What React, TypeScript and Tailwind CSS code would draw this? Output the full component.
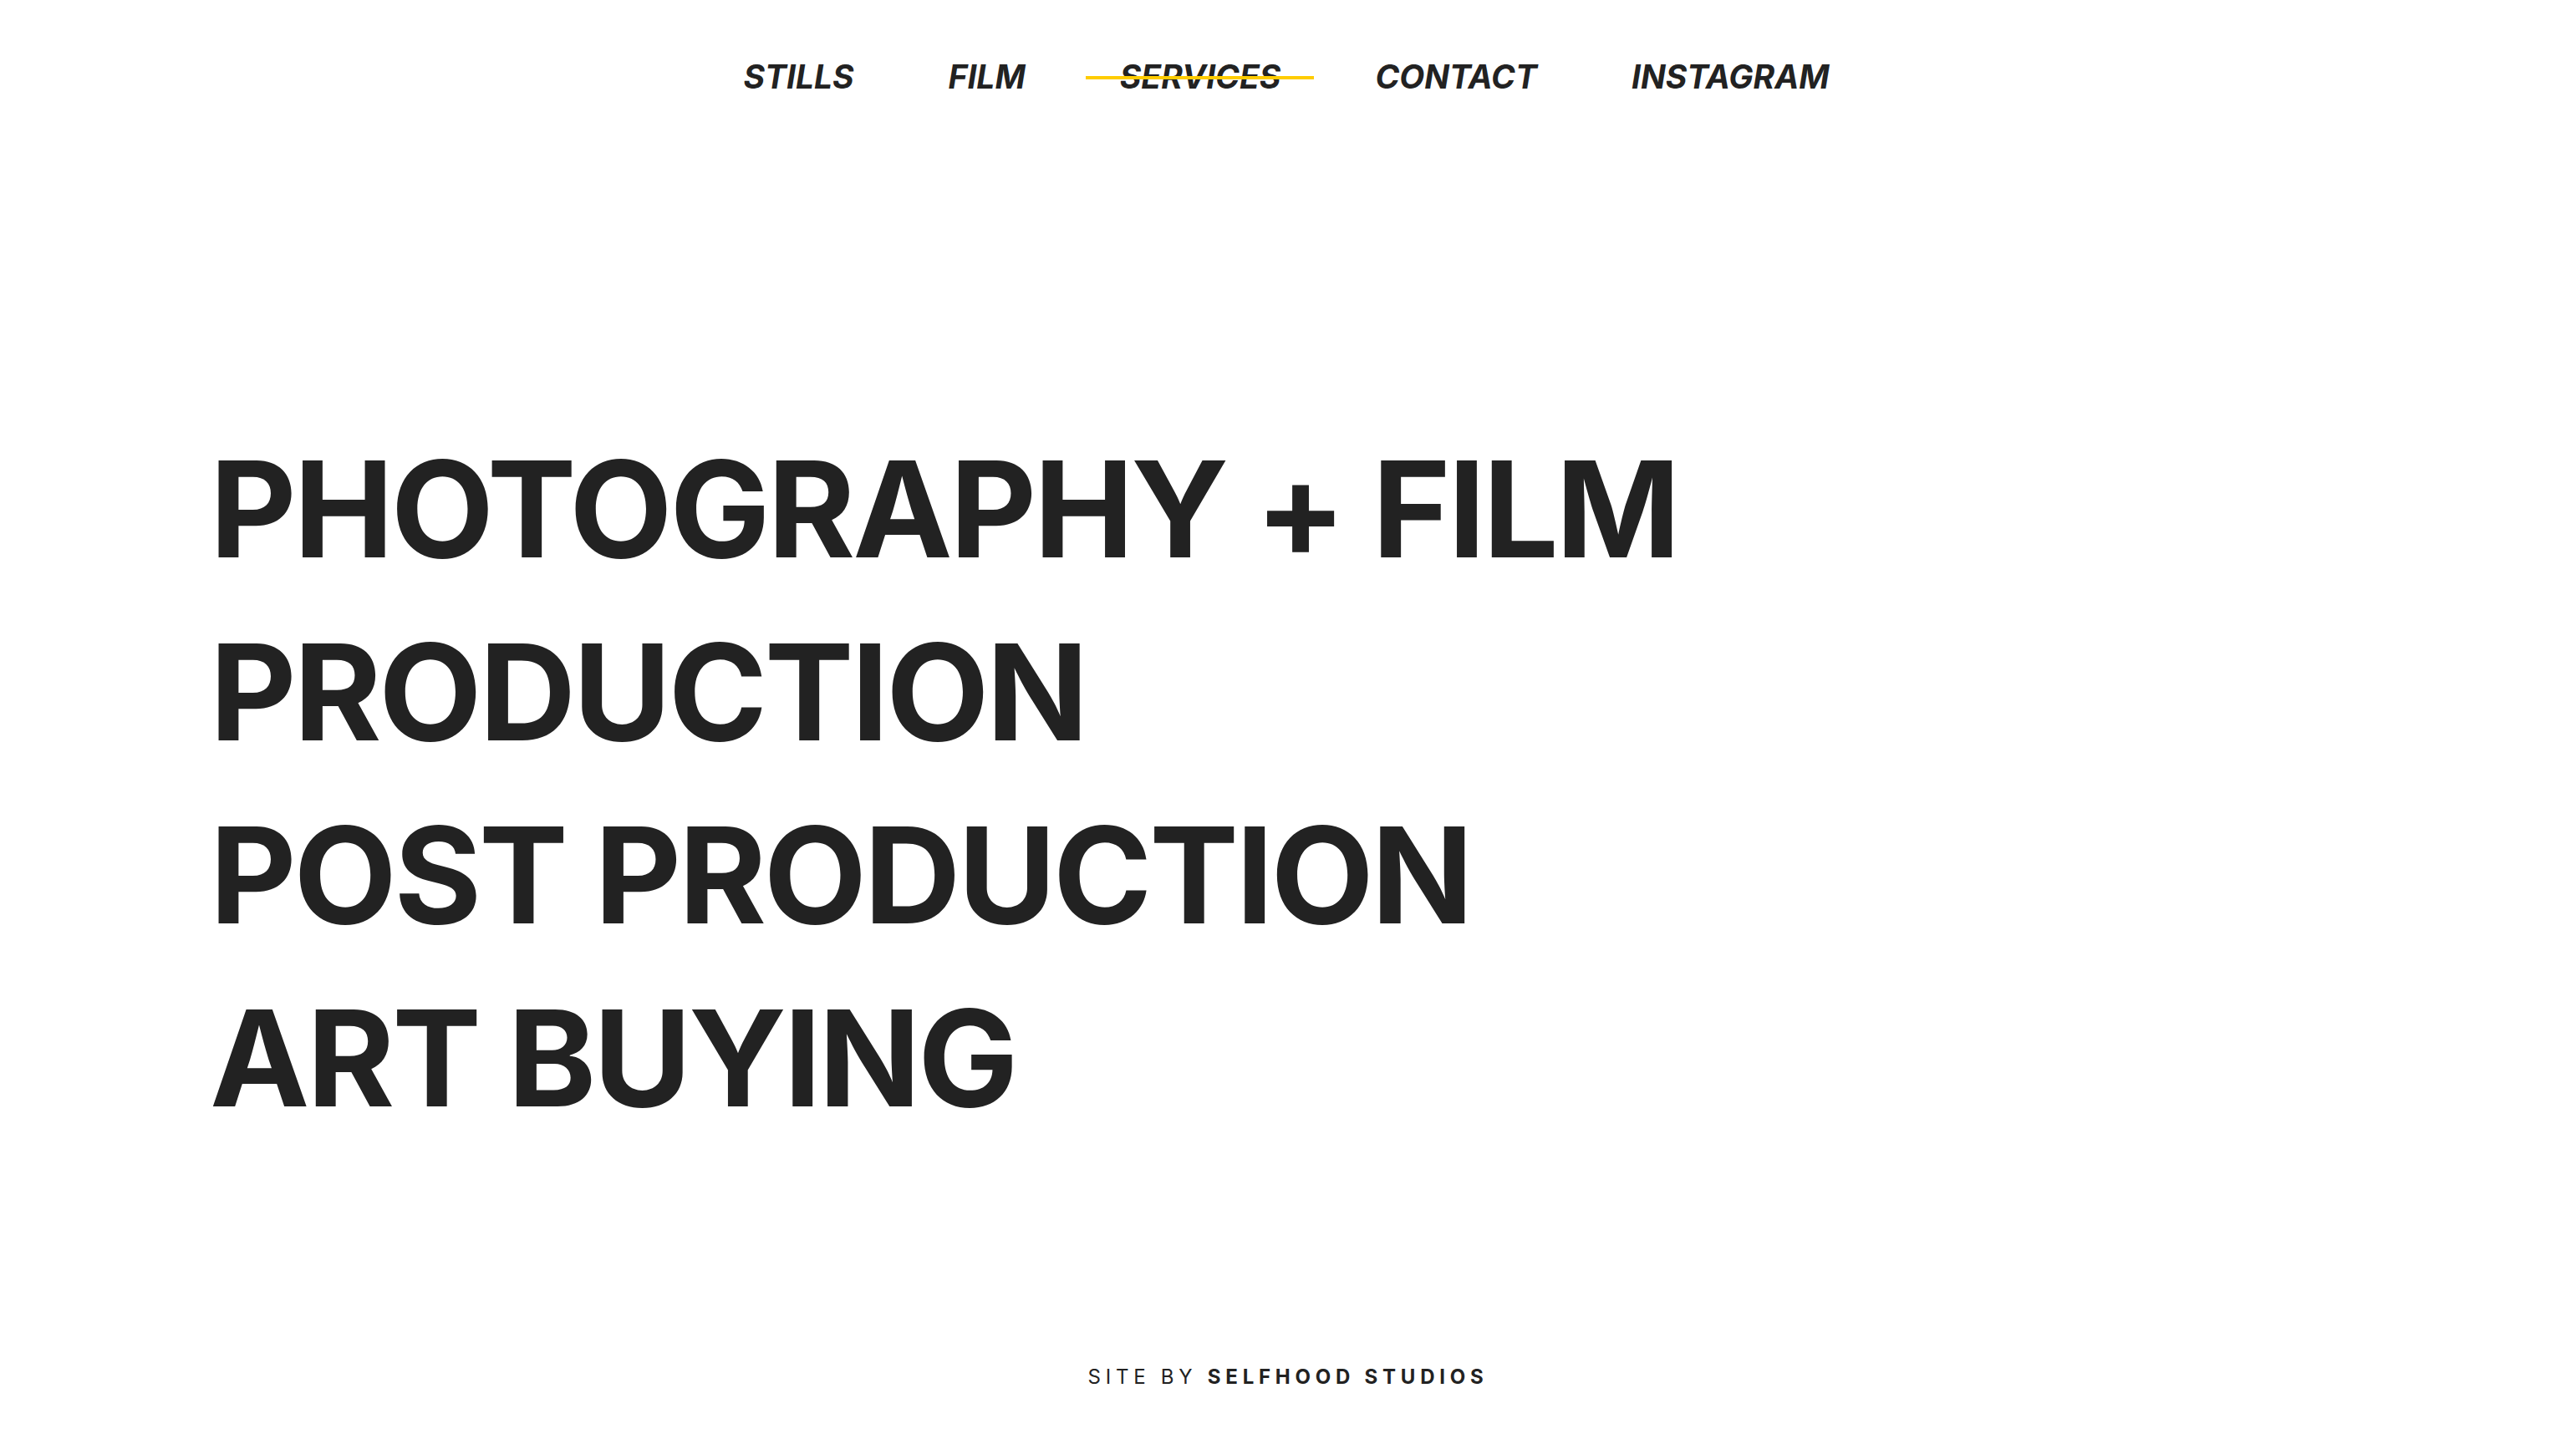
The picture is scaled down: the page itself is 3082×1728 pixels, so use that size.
import React from 'react'

const navItems = ['STILLS', 'FILM', 'SERVICES', 'CONTACT', 'INSTAGRAM']
const services = ['PHOTOGRAPHY + FILM', 'PRODUCTION', 'POST PRODUCTION', 'ART BUYING']

export default function App() {
  const active = 'SERVICES'

  return (
    <div
      className="h-screen flex flex-col bg-white text-[#222222]"
      style={{ fontFamily: 'Inter, "Liberation Sans", sans-serif' }}
    >
      {/* Top nav */}
      <nav className="flex justify-center gap-[113px] pt-[72px] pr-[4px]">
        {navItems.map((item) => (
          <a
            key={item}
            href="#"
            className="relative text-[39px] leading-none font-bold italic"
          >
            {item}
            {item === active && (
              <span className="absolute left-[-41px] right-[-40px] top-1/2 h-[4px] -translate-y-[1px] bg-[#ffcc00]" />
            )}
          </a>
        ))}
      </nav>

      {/* Services list */}
      <main className="flex-1 pl-[251px] pt-[389px]">
        {services.map((s) => (
          <h2 key={s} className="text-[160px] leading-[219px] font-bold tracking-[-0.02em]">
            {s}
          </h2>
        ))}
      </main>

      {/* Footer */}
      <footer className="flex justify-center pb-[62px] text-[24px] tracking-[0.24em]">
        <span>SITE BY&nbsp;</span>
        <span className="font-bold">SELFHOOD STUDIOS</span>
      </footer>
    </div>
  )
}
